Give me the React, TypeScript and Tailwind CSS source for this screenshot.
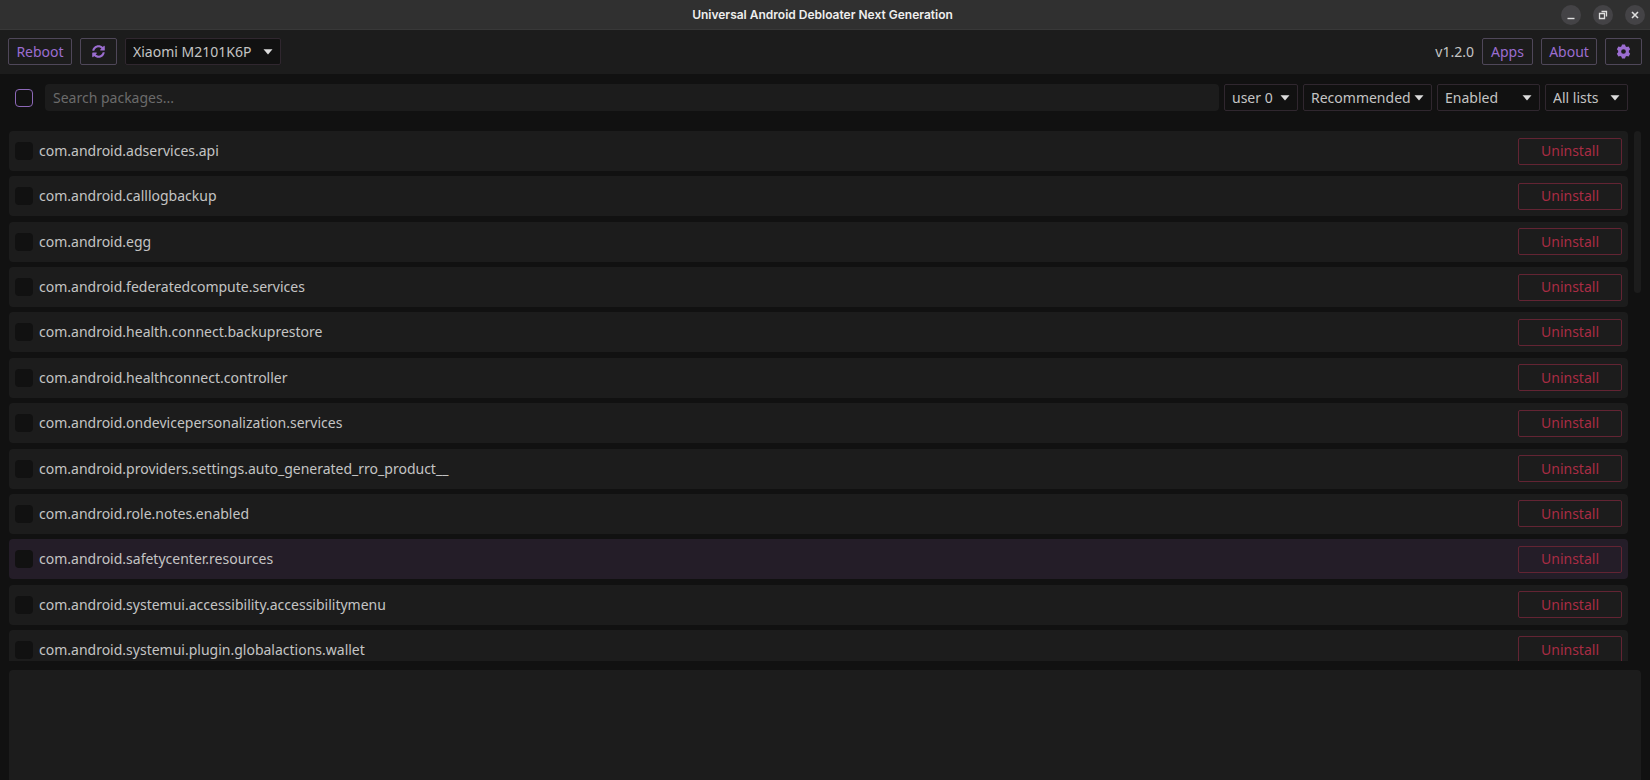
import { useState } from "react";
import type { ReactNode } from "react";

const packages = [
  "com.android.adservices.api",
  "com.android.calllogbackup",
  "com.android.egg",
  "com.android.federatedcompute.services",
  "com.android.health.connect.backuprestore",
  "com.android.healthconnect.controller",
  "com.android.ondevicepersonalization.services",
  "com.android.providers.settings.auto_generated_rro_product__",
  "com.android.role.notes.enabled",
  "com.android.safetycenter.resources",
  "com.android.systemui.accessibility.accessibilitymenu",
  "com.android.systemui.plugin.globalactions.wallet",
];

function WindowButton({ label, children }: { label: string; children: ReactNode }) {
  return (
    <button
      type="button"
      aria-label={label}
      className="flex size-5 items-center justify-center rounded-full bg-[#444346] text-[#dedede]"
    >
      <svg viewBox="0 0 12 12" className="size-3" fill="none" stroke="currentColor">
        {children}
      </svg>
    </button>
  );
}

function ToolbarButton({
  label,
  className,
  children,
}: {
  label?: string;
  className: string;
  children: ReactNode;
}) {
  return (
    <button
      type="button"
      aria-label={label}
      className={`flex h-[27px] items-center justify-center rounded-xs border border-[#4f4759] text-[#9b6dd0] ${className}`}
    >
      {children}
    </button>
  );
}

function Picker({
  label,
  options,
  className,
}: {
  label: string;
  options: string[];
  className: string;
}) {
  return (
    <div className={`relative ${className}`}>
      <select
        aria-label={label}
        className="h-[27px] w-full appearance-none rounded-xs border border-[#30272f] bg-[#111111] pl-[7px] text-[#c4c4c4] outline-none"
      >
        {options.map((option) => (
          <option key={option}>{option}</option>
        ))}
      </select>
      <svg
        viewBox="0 0 10 6"
        className="pointer-events-none absolute top-[11px] right-2 h-[6px] w-[10px] fill-[#dcdcdc]"
      >
        <path d="M0.500 0.300h9L5 5.400z" />
      </svg>
    </div>
  );
}

export default function App() {
  const [selected, setSelected] = useState<string[]>([]);
  const current = "com.android.safetycenter.resources";

  const toggle = (name: string) =>
    setSelected((names) =>
      names.includes(name) ? names.filter((n) => n !== name) : [...names, name],
    );

  return (
    <div className="flex h-screen flex-col overflow-hidden bg-[#111111] font-['Noto_Sans',sans-serif] text-[14px] leading-5 text-[#c4c4c4]">
      <header className="grid h-[30px] shrink-0 grid-cols-[1fr_auto_1fr] items-center border-b border-[#383838] bg-[#303030] pr-[5px]">
        <h1 className="col-start-2 font-[Inter,sans-serif] text-xs font-semibold text-[#eeeeee]">
          Universal Android Debloater Next Generation
        </h1>
        <div className="flex justify-end gap-3">
          <WindowButton label="Minimize">
            <path d="M2.500 9.500h7" strokeWidth="1.4" />
          </WindowButton>
          <WindowButton label="Restore">
            <path d="M2.500 4.500h5v5h-5z" strokeWidth="1.3" />
            <path d="M4.500 2.500h5v5" strokeWidth="1.3" />
          </WindowButton>
          <WindowButton label="Close">
            <path d="M3 3l6 6M9 3l-6 6" strokeWidth="1.6" />
          </WindowButton>
        </div>
      </header>

      <nav className="flex h-11 shrink-0 items-start gap-2 bg-[#1c1c1c] px-2 pt-2">
        <ToolbarButton className="w-16">Reboot</ToolbarButton>
        <ToolbarButton label="Refresh" className="w-[37px]">
          <svg viewBox="0 0 512 512" className="size-[13px]" fill="currentColor">
            <path d="M370.7 133.3C339.5 104 298.900 88 255.800 88c-77.500 0-144.300 53.200-162.800 126.900-1.300 5.400-6.100 9.100-11.700 9.100H24.100c-7.500 0-13.200-6.800-11.800-14.200C33.900 94.900 134.800 8 256 8c66.400 0 126.800 26.100 171.300 68.700L463 41c15.100-15.100 41-4.400 41 17v134c0 13.300-10.700 24-24 24H346c-21.400 0-32.100-25.900-17-41l41.700-41.700zM32 296h134c21.400 0 32.100 25.900 17 41l-41.800 41.800c31.300 29.300 71.800 45.300 114.900 45.300 77.400-.1 144.300-53.100 162.800-126.800 1.300-5.400 6.100-9.100 11.700-9.100h57.300c7.500 0 13.200 6.800 11.800 14.200C478.100 417.100 377.200 504 256 504c-66.400 0-126.800-26.100-171.300-68.700L49 471c-15.100 15.100-41 4.400-41-17V320c0-13.300 10.700-24 24-24z" />
          </svg>
        </ToolbarButton>
        <Picker label="Device" options={["Xiaomi M2101K6P"]} className="w-[156px]" />
        <span className="ml-auto leading-[27px]">v1.2.0</span>
        <ToolbarButton className="w-[51px]">Apps</ToolbarButton>
        <ToolbarButton className="w-14">About</ToolbarButton>
        <ToolbarButton label="Settings" className="w-[37px]">
          {/* six-lobed cog */}
          <svg viewBox="0 0 14 14" className="size-[15px]" fill="currentColor">
            <path
              fillRule="evenodd"
              d="M5.600 0.500h2.800l.5 1.700 1.100.6 1.800-.4 1.400 2.400-1.200 1.400v1.600l1.200 1.400-1.400 2.400-1.800-.4-1.100.6-.5 1.700H5.600l-.5-1.700-1.100-.6-1.800.4L.8 9.200 2 7.800V6.200L.8 4.800l1.400-2.400 1.800.4 1.100-.6zM7 4.800a2.200 2.200 0 1 0 0 4.400 2.200 2.200 0 0 0 0-4.400z"
            />
          </svg>
        </ToolbarButton>
      </nav>

      <main className="flex min-h-0 grow flex-col px-[9px]">
        <div className="mt-[10px] flex h-[27px] shrink-0 items-center gap-[5px] pr-[13px] pl-[6px]">
          <input
            type="checkbox"
            aria-label="Select all packages"
            className="mr-[7px] size-[18px] appearance-none rounded border border-[#8d68b8] checked:bg-[#9b6dd0]"
          />
          <input
            type="search"
            aria-label="Search packages"
            placeholder="Search packages..."
            className="h-full min-w-0 grow rounded bg-[#1c1c1c] px-2 outline-none placeholder:text-[#6b6b6b]"
          />
          <Picker label="User" options={["user 0"]} className="w-[74px]" />
          <Picker label="Removal level" options={["Recommended"]} className="w-[129px]" />
          <Picker label="Package state" options={["Enabled"]} className="w-[103px]" />
          <Picker label="List" options={["All lists"]} className="w-[83px]" />
        </div>

        <div className="mt-5 flex min-h-0 grow items-start gap-[6px] overflow-hidden">
          <ul className="flex h-[539px] grow flex-col justify-between">
            {packages.map((name) => (
              <li
                key={name}
                className={`flex h-10 shrink-0 items-center rounded px-[6px] ${
                  name === current ? "bg-[#241d28]" : "bg-[#1c1c1c]"
                }`}
              >
                <label className="flex grow items-center gap-[6px]">
                  <input
                    type="checkbox"
                    checked={selected.includes(name)}
                    onChange={() => toggle(name)}
                    className="size-[18px] appearance-none rounded bg-[#111111] checked:bg-[#9b6dd0]"
                  />
                  {name}
                </label>
                <button
                  type="button"
                  className="h-[27px] w-[104px] rounded-xs border border-[#632433] text-[#a92c44]"
                >
                  Uninstall
                </button>
              </li>
            ))}
          </ul>
          <div className="h-[162px] w-[7px] shrink-0 rounded bg-[#1c1c1c]" />
        </div>

        <section
          aria-label="Package description"
          className="mt-[9px] h-[110px] shrink-0 rounded-t bg-[#1c1c1c]"
        />
      </main>
    </div>
  );
}
